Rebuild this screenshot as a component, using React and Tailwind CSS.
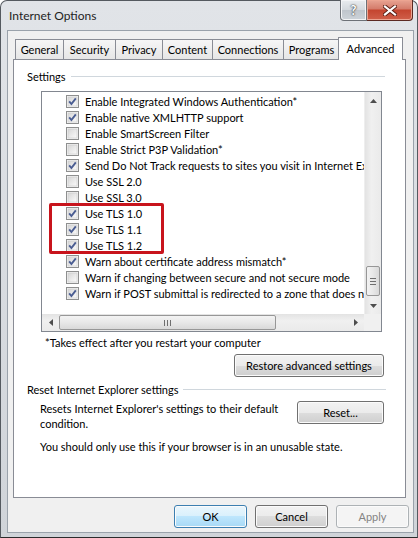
import React from 'react';

const rows = [
    ['Enable Integrated Windows Authentication*', true],
    ['Enable native XMLHTTP support', true],
    ['Enable SmartScreen Filter', false],
    ['Enable Strict P3P Validation*', false],
    ['Send Do Not Track requests to sites you visit in Internet Explorer*', true],
    ['Use SSL 2.0', false],
    ['Use SSL 3.0', false],
    ['Use TLS 1.0', true],
    ['Use TLS 1.1', true],
    ['Use TLS 1.2', true],
    ['Warn about certificate address mismatch*', true],
    ['Warn if changing between secure and not secure mode', false],
    ['Warn if POST submittal is redirected to a zone that does not permit posts', true],
];

const tabs = [
    { label: 'General', w: 'w-[49px]' },
    { label: 'Security', w: 'w-[53px]' },
    { label: 'Privacy', w: 'w-[48px]' },
    { label: 'Content', w: 'w-[51px]' },
    { label: 'Connections', w: 'w-[72px]' },
    { label: 'Programs', w: 'w-[57px]' },
];

const Checkbox = ({ checked }) => (
    <svg width="13" height="13" viewBox="0 0 13 13" className="shrink-0">
        <defs>
            <linearGradient id="cbg" x1="0" y1="0" x2="1" y2="1">
                <stop offset="0" stopColor="#d6d6d6" />
                <stop offset="1" stopColor="#fbfbfb" />
            </linearGradient>
        </defs>
        <rect x="0.5" y="0.5" width="12" height="12" fill="#f4f4f4" stroke="#8e8f8f" />
        <rect x="2" y="2" width="9" height="9" fill="url(#cbg)" stroke="#c9c9c9" strokeWidth="0.6" />
        {checked && <polyline points="3.2,6.4 5.4,9 9.8,3.4" fill="none" stroke="#4a5d92" strokeWidth="1.9" />}
    </svg>
);

const Button = ({ children, w, kind }) => {
    const styles = {
        normal: 'border-[#707070] bg-[linear-gradient(to_bottom,#f2f2f2_0%,#ebebeb_50%,#dddddd_50%,#cfcfcf_100%)] text-black',
        focus: 'border-[#3c7fb1] bg-[linear-gradient(to_bottom,#eaf6fd_0%,#d9f0fc_50%,#bee6fd_50%,#a7d9f5_100%)] text-black',
        disabled: 'border-[#adb2b5] bg-[#f4f4f4] text-[#838383]',
    };
    return (
        <div className={`${w} h-[23px] flex items-center justify-center rounded-[3px] border shadow-[inset_0_0_0_1px_#fbfbfb] ${styles[kind || 'normal']}`}>
            {children}
        </div>
    );
};

const GroupLabel = ({ children, line }) => (
    <div className="flex items-center h-[14px]">
        <span className="whitespace-nowrap">{children}</span>
        <div className={`h-px bg-[#d0d7dd] ml-[5px] ${line}`} />
    </div>
);

const Tri = ({ dir }) => {
    const pts = { up: '0,4 3.5,0 7,4', down: '0,0 3.5,4 7,0', left: '4,0 0,3.5 4,7', right: '0,0 4,3.5 0,7' }[dir];
    const vert = dir === 'up' || dir === 'down';
    return (
        <svg width={vert ? 7 : 4} height={vert ? 4 : 7} viewBox={vert ? '0 0 7 4' : '0 0 4 7'}>
            <polygon points={pts} fill="#4d4d4d" />
        </svg>
    );
};

export default function App() {
    return (
        <div className="w-[418px] h-[538px] bg-white font-['Lato',sans-serif] text-[11px] text-black leading-none">
            <div className="h-full flex flex-col rounded-t-[7px] border border-[#555a60] border-b-[#2b2b2b] bg-[linear-gradient(to_bottom,#e1e4e8,#d0d4d9)] pl-[6px] pr-[3px] pb-[4px]">
                {/* title bar */}
                <div className="h-[29px] flex justify-between">
                    <span className="pl-[2px] pt-[9px] text-[12px] text-[#1e1e1e]">Internet Options</span>
                    <div className="flex -mt-[1px] mr-[1px] h-[21px]">
                        <div className="w-[27px] h-full flex items-center justify-center rounded-bl-[4px] border border-t-0 border-[#6d7177] bg-[linear-gradient(to_bottom,#e9ecef_0%,#d3d8dd_50%,#bfc5cc_50%,#cdd3d9_100%)] shadow-[inset_0_0_0_1px_#f3f4f6]">
                            <span className="text-white font-bold text-[13px] [text-shadow:0_0_2px_#333,0_0_1px_#333]">?</span>
                        </div>
                        <div className="w-[46px] h-full flex items-center justify-center rounded-br-[4px] border border-t-0 border-l-0 border-[#5c2a22] bg-[linear-gradient(to_bottom,#e8a493_0%,#d47b6a_45%,#c4452f_50%,#d0604a_100%)] shadow-[inset_0_0_0_1px_#eca491]">
                            <svg width="14" height="11" viewBox="0 0 14 11">
                                <path d="M2 1.5 L12 9.5 M12 1.5 L2 9.5" stroke="#5a1e14" strokeWidth="4" strokeLinecap="square" />
                                <path d="M2 1.5 L12 9.5 M12 1.5 L2 9.5" stroke="#ffffff" strokeWidth="2.2" strokeLinecap="square" />
                            </svg>
                        </div>
                    </div>
                </div>

                {/* client area */}
                <div className="flex-1 bg-[#f0f0f0] border border-[#9aa2ab] pt-[6px] pl-[5px] flex flex-col">
                    {/* tabs */}
                    <div className="flex items-end h-[22px] pl-[2px]">
                        {tabs.map((t, i) => (
                            <div key={t.label} className={`${t.w} ${i > 0 ? '-ml-px' : ''} h-[20px] flex items-center justify-center border border-b-0 border-[#898c95] bg-[linear-gradient(to_bottom,#f6f6f6,#e6e6e6)]`}>
                                {t.label}
                            </div>
                        ))}
                        <div className="relative z-10 -ml-[2px] -mb-px w-[65px] h-[23px] flex items-center justify-center border border-b-0 border-[#898c95] bg-white pb-[2px]">
                            Advanced
                        </div>
                    </div>

                    {/* panel */}
                    <div className="w-[393px] h-[439px] bg-white border border-[#898c95] flex flex-col">
                        <div className="mt-[9px] pl-[13px] pr-[20px]">
                            <GroupLabel line="flex-1">Settings</GroupLabel>
                        </div>

                        {/* list box */}
                        <div className="mt-[8px] ml-[27px] w-[341px] h-[241px] border border-[#828790] grid grid-cols-[322px_17px] grid-rows-[222px_17px]">
                            <div className="relative overflow-hidden pt-[1px]">
                                {rows.map(([label, checked]) => (
                                    <div key={label} className="h-[16px] flex items-center pl-[24px] whitespace-nowrap">
                                        <Checkbox checked={checked} />
                                        <span className="ml-[6px]">{label}</span>
                                    </div>
                                ))}
                                <div className="absolute left-[7px] top-[111px] w-[115px] h-[51px] border-[3px] border-[#c8141c] rounded-[2px]" />
                            </div>

                            {/* vertical scrollbar */}
                            <div className="flex flex-col bg-[linear-gradient(to_right,#e3e3e3,#f0f0f0_40%,#eaeaea)] border-l border-[#eeeeee]">
                                <div className="h-[17px] flex items-center justify-center"><Tri dir="up" /></div>
                                <div className="flex-1 flex flex-col justify-end pb-[1px] px-px">
                                    <div className="h-[30px] rounded-[2px] border border-[#979797] bg-[linear-gradient(to_right,#f3f3f3,#e8e8e8_50%,#d9d9d9)] flex flex-col items-center justify-center gap-[2px]">
                                        <div className="w-[6px] h-px bg-[#6f6f6f]" />
                                        <div className="w-[6px] h-px bg-[#6f6f6f]" />
                                        <div className="w-[6px] h-px bg-[#6f6f6f]" />
                                    </div>
                                </div>
                                <div className="h-[17px] flex items-center justify-center"><Tri dir="down" /></div>
                            </div>

                            {/* horizontal scrollbar */}
                            <div className="flex bg-[linear-gradient(to_bottom,#e3e3e3,#f0f0f0_40%,#eaeaea)]">
                                <div className="w-[17px] flex items-center justify-center"><Tri dir="left" /></div>
                                <div className="flex-1 py-px">
                                    <div className="w-[217px] h-full rounded-[2px] border border-[#979797] bg-[linear-gradient(to_bottom,#f3f3f3,#e8e8e8_50%,#d9d9d9)] flex items-center justify-center gap-[2px]">
                                        <div className="w-px h-[6px] bg-[#6f6f6f]" />
                                        <div className="w-px h-[6px] bg-[#6f6f6f]" />
                                        <div className="w-px h-[6px] bg-[#6f6f6f]" />
                                    </div>
                                </div>
                                <div className="w-[17px] flex items-center justify-center"><Tri dir="right" /></div>
                            </div>
                            <div className="bg-[#f0f0f0]" />
                        </div>

                        <div className="mt-[3px] ml-[31px] h-[14px] flex items-center">*Takes effect after you restart your computer</div>

                        <div className="mt-[5px] flex justify-end pr-[21px]">
                            <Button w="w-[150px]">Restore advanced settings</Button>
                        </div>

                        <div className="mt-[5px] pl-[13px] pr-[19px]">
                            <GroupLabel line="flex-1">Reset Internet Explorer settings</GroupLabel>
                        </div>

                        <div className="mt-[5px] pl-[26px] pr-[21px] flex justify-between items-start">
                            <div className="leading-[15px] whitespace-nowrap">
                                Resets Internet Explorer's settings to their default<br />condition.
                            </div>
                            <Button w="w-[87px]">Reset...</Button>
                        </div>

                        <div className="mt-[8px] pl-[26px] leading-[15px]">
                            You should only use this if your browser is in an unusable state.
                        </div>
                    </div>

                    {/* dialog buttons */}
                    <div className="mt-[7px] flex justify-end gap-[8px] pr-[4px]">
                        <Button w="w-[73px]" kind="focus">OK</Button>
                        <Button w="w-[73px]">Cancel</Button>
                        <Button w="w-[73px]" kind="disabled">Apply</Button>
                    </div>
                </div>
            </div>
        </div>
    );
}
